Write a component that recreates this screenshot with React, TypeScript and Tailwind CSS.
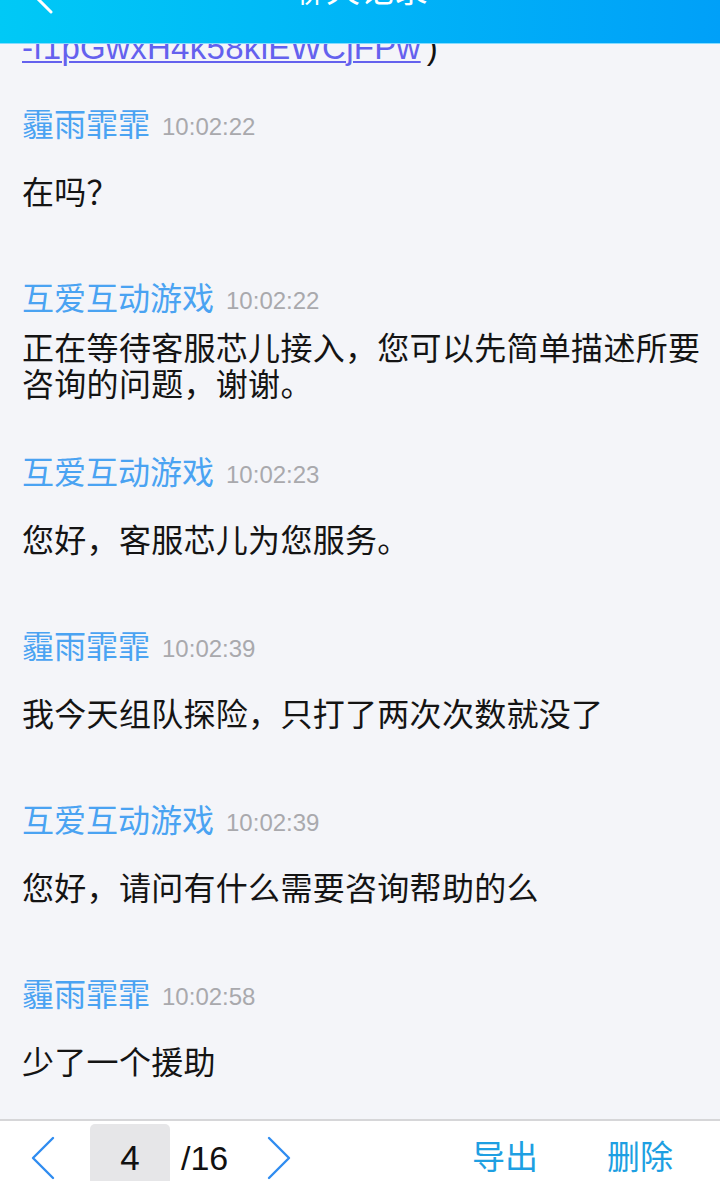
import React from "react";

const FONT = '"Liberation Sans", "Noto Sans CJK SC", sans-serif';

type Msg = { name: string; time: string; lines: string[] };

const msgs: Msg[] = [
  { name: "霾雨霏霏", time: "10:02:22", lines: ["在吗？"] },
  {
    name: "互爱互动游戏",
    time: "10:02:22",
    lines: ["正在等待客服芯儿接入，您可以先简单描述所要", "咨询的问题，谢谢。"],
  },
  { name: "互爱互动游戏", time: "10:02:23", lines: ["您好，客服芯儿为您服务。"] },
  { name: "霾雨霏霏", time: "10:02:39", lines: ["我今天组队探险，只打了两次次数就没了"] },
  { name: "互爱互动游戏", time: "10:02:39", lines: ["您好，请问有什么需要咨询帮助的么"] },
  { name: "霾雨霏霏", time: "10:02:58", lines: ["少了一个援助"] },
];

function Block({ m }: { m: Msg }) {
  return (
    <div className="mb-[38px]">
      <div className="h-[40px] flex items-center">
        <span className="text-[32px] leading-[40px] text-[#4aa3f2]">{m.name}</span>
        <span className="ml-[12px] mt-[3px] text-[24px] leading-[40px] text-[#a9a9ad]">{m.time}</span>
      </div>
      <div className="h-[96px] flex flex-col justify-center">
        {m.lines.map((l, i) => (
          <div key={i} className="text-[32px] leading-[36px] text-[#141414] tracking-[0.3px] whitespace-nowrap">
            {l}
          </div>
        ))}
      </div>
    </div>
  );
}

export default function App() {
  return (
    <div
      className="relative w-[720px] h-[1181px] overflow-hidden bg-[#f4f5f9] flex flex-col"
      style={{ fontFamily: FONT }}
    >
      <div className="flex-1 overflow-hidden pl-[22px] pr-[18px] pt-[30px]">
        <div className="h-[38px] leading-[36px] text-[33px] whitespace-nowrap">
          <span className="text-[#6461ee] underline decoration-[2px] underline-offset-[2px] tracking-[0.3px]">
            -f1pGwxH4k58klEWCjFPw
          </span>
          <span className="text-[#111] ml-[6px]">)</span>
        </div>
        <div className="h-[37px]" />
        {msgs.map((m, i) => (
          <Block key={i} m={m} />
        ))}
      </div>

      <div className="h-[62px] shrink-0 bg-white border-t-[2px] border-[#d6d6d8] flex items-start relative">
        <svg className="absolute left-[30px] top-[15px]" width="26" height="44" viewBox="0 0 26 44">
          <polyline points="23,2 3,22 23,42" fill="none" stroke="#2f8cf0" strokeWidth="2.4" strokeLinecap="round" strokeLinejoin="round" />
        </svg>
        <div className="absolute left-[90px] top-[3px] w-[80px] h-[70px] bg-[#e6e6e8] rounded-t-[5px] flex justify-center">
          <span className="text-[35px] leading-[40px] mt-[14px] text-[#111]">4</span>
        </div>
        <span className="absolute left-[181px] top-[17px] text-[34px] leading-[40px] text-[#111]">/16</span>
        <svg className="absolute left-[266px] top-[15px]" width="26" height="44" viewBox="0 0 26 44">
          <polyline points="3,2 23,22 3,42" fill="none" stroke="#2f8cf0" strokeWidth="2.4" strokeLinecap="round" strokeLinejoin="round" />
        </svg>
        <span className="absolute left-[472px] top-[17px] text-[33px] leading-[40px] text-[#1e9fe2]">导出</span>
        <span className="absolute left-[607px] top-[17px] text-[33px] leading-[40px] text-[#1e9fe2]">删除</span>
      </div>

      <div className="absolute top-0 left-0 right-0 h-[44px] bg-gradient-to-r from-[#00c9f6] to-[#00a0f8] border-b border-[#86dcff] overflow-hidden">
        <svg className="absolute left-[28px] top-[-30px]" width="26" height="44" viewBox="0 0 26 44">
          <polyline points="23,2 3,22 23,42" fill="none" stroke="#ffffff" strokeWidth="3" strokeLinecap="round" strokeLinejoin="round" />
        </svg>
        <div className="absolute left-0 right-0 top-[-30px] text-center text-[34px] leading-[40px] text-white">
          聊天记录
        </div>
      </div>
    </div>
  );
}
